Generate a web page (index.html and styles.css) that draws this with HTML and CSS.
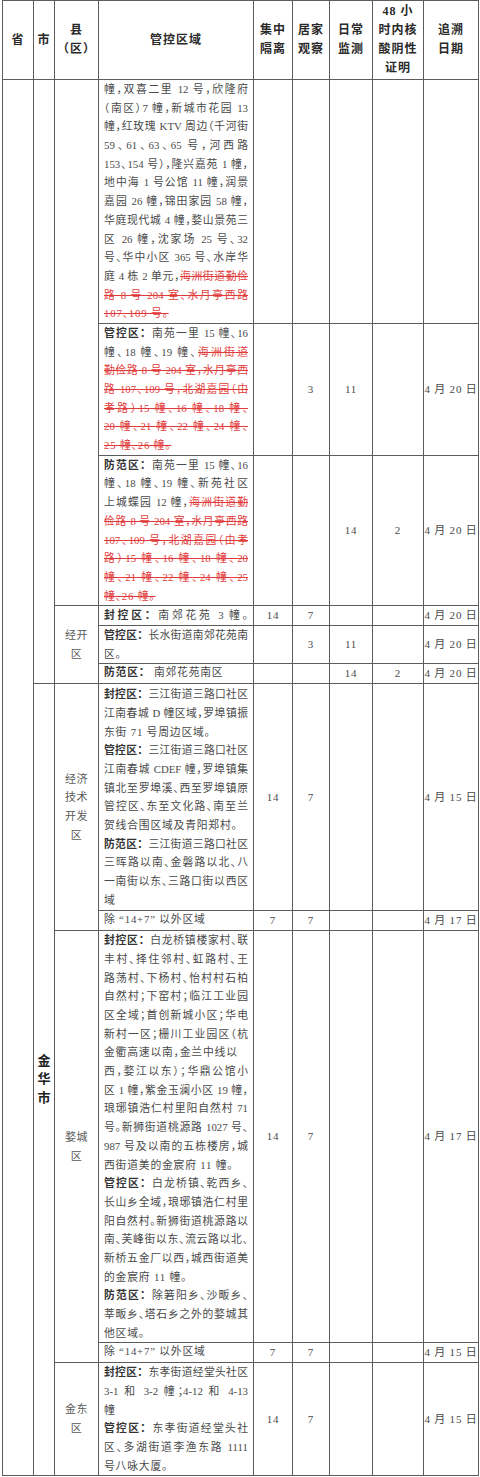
FILE: index.html
```html
<!DOCTYPE html>
<html lang="zh-CN">
<head>
<meta charset="utf-8">
<title>管控区域</title>
<link rel="stylesheet" href="styles.css">
</head>
<body>
<table class="grid">
  <colgroup>
    <col class="c-prov"><col class="c-city"><col class="c-county"><col class="c-area">
    <col class="c-n1"><col class="c-n2"><col class="c-n3"><col class="c-n4"><col class="c-date">
  </colgroup>
  <thead>
    <tr>
      <th>省</th>
      <th>市</th>
      <th>县<br>（区）</th>
      <th>管控区域</th>
      <th>集中<br>隔离</th>
      <th>居家<br>观察</th>
      <th>日常<br>监测</th>
      <th>48 小<br>时内核<br>酸阴性<br>证明</th>
      <th>追溯<br>日期</th>
    </tr>
  </thead>
  <tbody>
    <tr>
      <td rowspan="11"></td>
      <td rowspan="6"></td>
      <td rowspan="3"></td>
      <td class="area">
        <span class="ln">幢，双喜二里 12 号，欣隆府</span>
        <span class="ln">（南区）7 幢，新城市花园 13</span>
        <span class="ln">幢，红玫瑰 KTV 周边（千河街</span>
        <span class="ln">59、61、63、65 号，河西路</span>
        <span class="ln">153、154 号），隆兴嘉苑 1 幢，</span>
        <span class="ln">地中海 1 号公馆 11 幢，润景</span>
        <span class="ln">嘉园 26 幢，锦田家园 58 幢，</span>
        <span class="ln">华庭现代城 4 幢，婺山景苑三</span>
        <span class="ln">区 26 幢，沈家场 25 号、32</span>
        <span class="ln">号、华中小区 365 号、水岸华</span>
        <span class="ln">庭 4 栋 2 单元，<span class="del">海洲街道勤俭</span></span>
        <span class="ln"><span class="del">路 8 号 204 室、水月亭西路</span></span>
        <span class="ln end"><span class="del">107、109 号。</span></span>
      </td>
      <td></td><td></td><td></td><td></td><td></td>
    </tr>
    <tr>
      <td class="area">
        <span class="ln"><b>管控区：</b>南苑一里 15 幢、16</span>
        <span class="ln">幢、18 幢、19 幢、<span class="del">海洲街道</span></span>
        <span class="ln"><span class="del">勤俭路 8 号 204 室，水月亭西</span></span>
        <span class="ln"><span class="del">路 107、109 号，北湖嘉园（由</span></span>
        <span class="ln"><span class="del">孝路）15 幢、16 幢、18 幢、</span></span>
        <span class="ln"><span class="del">20 幢、21 幢、22 幢、24 幢、</span></span>
        <span class="ln end"><span class="del">25 幢、26 幢。</span></span>
      </td>
      <td></td><td class="num">3</td><td class="num">11</td><td></td><td class="num">4 月 20 日</td>
    </tr>
    <tr>
      <td class="area">
        <span class="ln"><b>防范区：</b>南苑一里 15 幢、16</span>
        <span class="ln">幢、18 幢、19 幢、新苑社区</span>
        <span class="ln">上城蝶园 12 幢，<span class="del">海洲街道勤</span></span>
        <span class="ln"><span class="del">俭路 8 号 204 室，水月亭西路</span></span>
        <span class="ln"><span class="del">107、109 号，北湖嘉园（由孝</span></span>
        <span class="ln"><span class="del">路）15 幢、16 幢、18 幢、20</span></span>
        <span class="ln"><span class="del">幢、21 幢、22 幢、24 幢、25</span></span>
        <span class="ln end"><span class="del">幢、26 幢。</span></span>
      </td>
      <td></td><td></td><td class="num">14</td><td class="num">2</td><td class="num">4 月 20 日</td>
    </tr>
    <tr>
      <td rowspan="3" class="lbl">经开<br>区</td>
      <td class="area">
        <span class="ln"><b>封控区：</b>南郊花苑 3 幢。</span>
      </td>
      <td class="num">14</td><td class="num">7</td><td></td><td></td><td class="num">4 月 20 日</td>
    </tr>
    <tr>
      <td class="area">
        <span class="ln"><b>管控区：</b>长水街道南郊花苑南</span>
        <span class="ln end">区。</span>
      </td>
      <td></td><td class="num">3</td><td class="num">11</td><td></td><td class="num">4 月 20 日</td>
    </tr>
    <tr>
      <td class="area">
        <span class="ln end short"><b>防范区：</b> 南郊花苑南区</span>
      </td>
      <td></td><td></td><td class="num">14</td><td class="num">2</td><td class="num">4 月 20 日</td>
    </tr>
    <tr>
      <td rowspan="5" class="city">金<br>华<br>市</td>
      <td rowspan="2" class="lbl">经济<br>技术<br>开发<br>区</td>
      <td class="area pad">
        <span class="ln"><b>封控区：</b>三江街道三路口社区</span>
        <span class="ln">江南春城 D 幢区域，罗埠镇振</span>
        <span class="ln end">东街 71 号周边区域。</span>
        <span class="ln"><b>管控区：</b>三江街道三路口社区</span>
        <span class="ln">江南春城 CDEF 幢，罗埠镇集</span>
        <span class="ln">镇北至罗埠溪、西至罗埠镇原</span>
        <span class="ln">管控区、东至文化路、南至兰</span>
        <span class="ln end">贺线合围区域及青阳郑村。</span>
        <span class="ln"><b>防范区：</b>三江街道三路口社区</span>
        <span class="ln">三晖路以南、金磐路以北、八</span>
        <span class="ln">一南街以东、三路口街以西区</span>
        <span class="ln end">域</span>
      </td>
      <td class="num">14</td><td class="num">7</td><td></td><td></td><td class="num">4 月 15 日</td>
    </tr>
    <tr>
      <td class="area">
        <span class="ln end short">除 “14+7” 以外区域</span>
      </td>
      <td class="num">7</td><td class="num">7</td><td></td><td></td><td class="num">4 月 17 日</td>
    </tr>
    <tr>
      <td rowspan="2" class="lbl">婺城<br>区</td>
      <td class="area">
        <span class="ln"><b>封控区：</b>白龙桥镇楼家村、联</span>
        <span class="ln">丰村、择住邻村、虹路村、王</span>
        <span class="ln">路荡村、下杨村、怡村村石柏</span>
        <span class="ln">自然村；下窑村；临江工业园</span>
        <span class="ln">区全域；首创新城小区；华电</span>
        <span class="ln">新村一区；栅川工业园区（杭</span>
        <span class="ln end">金衢高速以南，金兰中线以</span>
        <span class="ln">西，婺江以东）；华鼎公馆小</span>
        <span class="ln">区 1 幢，紫金玉澜小区 19 幢，</span>
        <span class="ln">琅琊镇浩仁村里阳自然村 71</span>
        <span class="ln">号。新狮街道桃源路 1027 号、</span>
        <span class="ln">987 号及以南的五栋楼房，城</span>
        <span class="ln end">西街道美的金宸府 11 幢。</span>
        <span class="ln"><b>管控区：</b>白龙桥镇、乾西乡、</span>
        <span class="ln">长山乡全域，琅琊镇浩仁村里</span>
        <span class="ln">阳自然村。新狮街道桃源路以</span>
        <span class="ln">南、芙峰街以东、流云路以北、</span>
        <span class="ln">新桥五金厂以西，城西街道美</span>
        <span class="ln end">的金宸府 11 幢。</span>
        <span class="ln"><b>防范区：</b>除箬阳乡、沙畈乡、</span>
        <span class="ln">莘畈乡、塔石乡之外的婺城其</span>
        <span class="ln end">他区域。</span>
      </td>
      <td class="num">14</td><td class="num">7</td><td></td><td></td><td class="num">4 月 17 日</td>
    </tr>
    <tr>
      <td class="area">
        <span class="ln end short">除 “14+7” 以外区域</span>
      </td>
      <td class="num">7</td><td class="num">7</td><td></td><td></td><td class="num">4 月 15 日</td>
    </tr>
    <tr>
      <td class="lbl">金东<br>区</td>
      <td class="area">
        <span class="ln"><b>封控区：</b>东孝街道经堂头社区</span>
        <span class="ln">3-1 和 3-2 幢；4-12 和 4-13</span>
        <span class="ln end">幢</span>
        <span class="ln"><b>管控区：</b>东孝街道经堂头社</span>
        <span class="ln">区、多湖街道李渔东路 1111</span>
        <span class="ln end">号八咏大厦。</span>
      </td>
      <td class="num">14</td><td class="num">7</td><td></td><td></td><td class="num">4 月 15 日</td>
    </tr>
  </tbody>
</table>
</body>
</html>
```
FILE: styles.css
```css
html, body {
  margin: 0;
  padding: 0;
  background: #ffffff;
}

body {
  font-family: "Liberation Serif", "Noto Sans CJK SC", serif;
  color: #4a4a4a;
}

.grid {
  border-collapse: collapse;
  table-layout: fixed;
  width: 477px;
  margin-left: 2px;
}

.c-prov { width: 31px; }
.c-city { width: 21px; }
.c-county { width: 44px; }
.c-area { width: 155px; }
.c-n1 { width: 39px; }
.c-n2 { width: 37px; }
.c-n3 { width: 43px; }
.c-n4 { width: 51px; }
.c-date { width: 55px; }

.grid th,
.grid td {
  border: 1px solid #5c5c5c;
  padding: 0;
  font-size: 11px;
  line-height: 18.8px;
  text-align: center;
  vertical-align: middle;
}

.grid th {
  height: 78px;
  font-size: 12px;
  font-weight: bold;
  letter-spacing: 1px;
  color: #2a2a2a;
}

.grid td.area {
  text-align: left;
  vertical-align: top;
  padding: 0 5px;
  font-size: 10.8px;
  font-feature-settings: "halt";
}

.grid td.pad {
  padding-top: 1px;
  padding-bottom: 1px;
}

.ln {
  display: block;
  height: 18.7px;
  line-height: 18.7px;
  overflow: hidden;
  text-align: justify;
  text-align-last: justify;
}

.ln.end {
  text-align-last: left;
  letter-spacing: 0.8px;
}

.ln.short {
  height: 16.5px;
  line-height: 16.5px;
}

.ln b {
  font-weight: bold;
  color: #333333;
  font-feature-settings: normal;
}

.del {
  color: #e23b3b;
  text-decoration: line-through;
  text-decoration-color: #e23b3b;
}

.num {
  letter-spacing: 0.8px;
}

.lbl {
  color: #5a5a5a;
  letter-spacing: 0.5px;
}

.grid td.city {
  font-weight: bold;
  font-size: 13px;
  color: #222222;
}
```
